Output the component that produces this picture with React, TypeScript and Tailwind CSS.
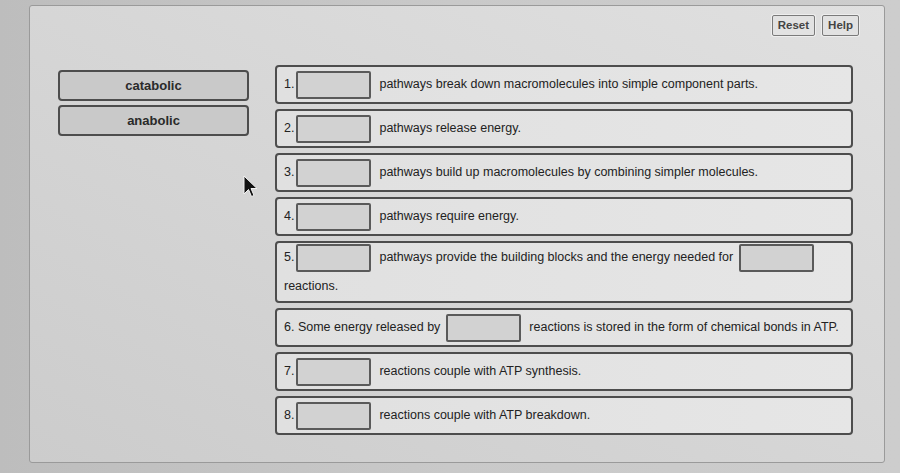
import React from "react";

type Part = string | { blank: true };

const BANK = ["catabolic", "anabolic"];

const B: Part = { blank: true };

const ROWS: { parts: Part[]; tall?: boolean }[] = [
  { parts: ["1.", B, "pathways break down macromolecules into simple component parts."] },
  { parts: ["2.", B, "pathways release energy."] },
  { parts: ["3.", B, "pathways build up macromolecules by combining simpler molecules."] },
  { parts: ["4.", B, "pathways require energy."] },
  { parts: ["5.", B, "pathways provide the building blocks and the energy needed for", B, "reactions."], tall: true },
  { parts: ["6. Some energy released by", B, "reactions is stored in the form of chemical bonds in ATP."] },
  { parts: ["7.", B, "reactions couple with ATP synthesis."] },
  { parts: ["8.", B, "reactions couple with ATP breakdown."] },
];

function Blank({ tight }: { tight: boolean }) {
  return (
    <span
      className={`mr-[8px] inline-block h-[28px] w-[75px] rounded-[2px] border-2 border-[#5a5a5a] bg-[#d2d2d2] align-middle ${
        tight ? "ml-[2px]" : "ml-[6px]"
      }`}
    />
  );
}

function Row({ parts, tall }: { parts: Part[]; tall?: boolean }) {
  return (
    <div
      className={`flex items-center rounded-[4px] border-2 border-[#4d4d4d] bg-linear-to-r from-[#e0e0e0] to-[#e6e6e6] px-[7px] ${
        tall ? "h-[62px] py-[1px]" : "h-[39px]"
      }`}
    >
      <p className="text-[12.5px] leading-[29px] text-[#222]">
        {parts.map((p, i) =>
          typeof p === "string" ? (
            <span key={i}>{p}</span>
          ) : (
            <Blank key={i} tight={i > 0 && /^\d\.$/.test(parts[i - 1] as string)} />
          )
        )}
      </p>
    </div>
  );
}

export default function App() {
  return (
    <div
      className="relative h-[473px] w-[900px] overflow-hidden bg-linear-to-r from-[#bdbdbd] via-[#c9c9c9] to-[#cdcdcd] pl-[29px] pt-[5px]"
      style={{ fontFamily: '"Liberation Sans", Arial, sans-serif' }}
    >
      <div className="h-[458px] w-[856px] rounded-[3px] border border-[#9a9a9a] bg-linear-to-tr from-[#cccccc] via-[#d6d6d6] to-[#e0e0e0]">
        {/* Top buttons */}
        <div className="flex justify-end gap-[7px] pr-[25px] pt-[9px]">
          <button className="h-[21px] rounded-[2px] border border-[#7a7a7a] bg-[#e2e2e2] px-[5px] text-[11.5px] font-bold text-[#444] shadow-[0_0_0_1px_#eeeeee]">
            Reset
          </button>
          <button className="h-[21px] rounded-[2px] border border-[#7a7a7a] bg-[#e2e2e2] px-[5px] text-[11.5px] font-bold text-[#444] shadow-[0_0_0_1px_#eeeeee]">
            Help
          </button>
        </div>

        <div className="mt-[29px] flex pl-[28px]">
          {/* Word bank */}
          <div className="mt-[5px] flex w-[191px] flex-col gap-[4px]">
            {BANK.map((w) => (
              <div
                key={w}
                className="flex h-[31px] items-center justify-center rounded-[4px] border-2 border-[#4d4d4d] bg-[#c9c9c9] text-[13px] font-bold text-[#2a2a2a]"
              >
                {w}
              </div>
            ))}
          </div>

          {/* Statements */}
          <div className="ml-[26px] flex w-[578px] flex-col gap-[5px]">
            {ROWS.map((r, i) => (
              <Row key={i} parts={r.parts} tall={r.tall} />
            ))}
          </div>
        </div>
      </div>

      {/* mouse pointer */}
      <svg
        className="absolute left-[243px] top-[175px]"
        width="16"
        height="24"
        viewBox="0 0 16 24"
      >
        <path
          d="M1 1 L1 19 L5.5 14.5 L8.5 21.5 L11 20.5 L8 13.5 L14 13.5 Z"
          fill="#111"
          stroke="#f2f2f2"
          strokeWidth="1"
          strokeLinejoin="round"
        />
      </svg>
    </div>
  );
}
